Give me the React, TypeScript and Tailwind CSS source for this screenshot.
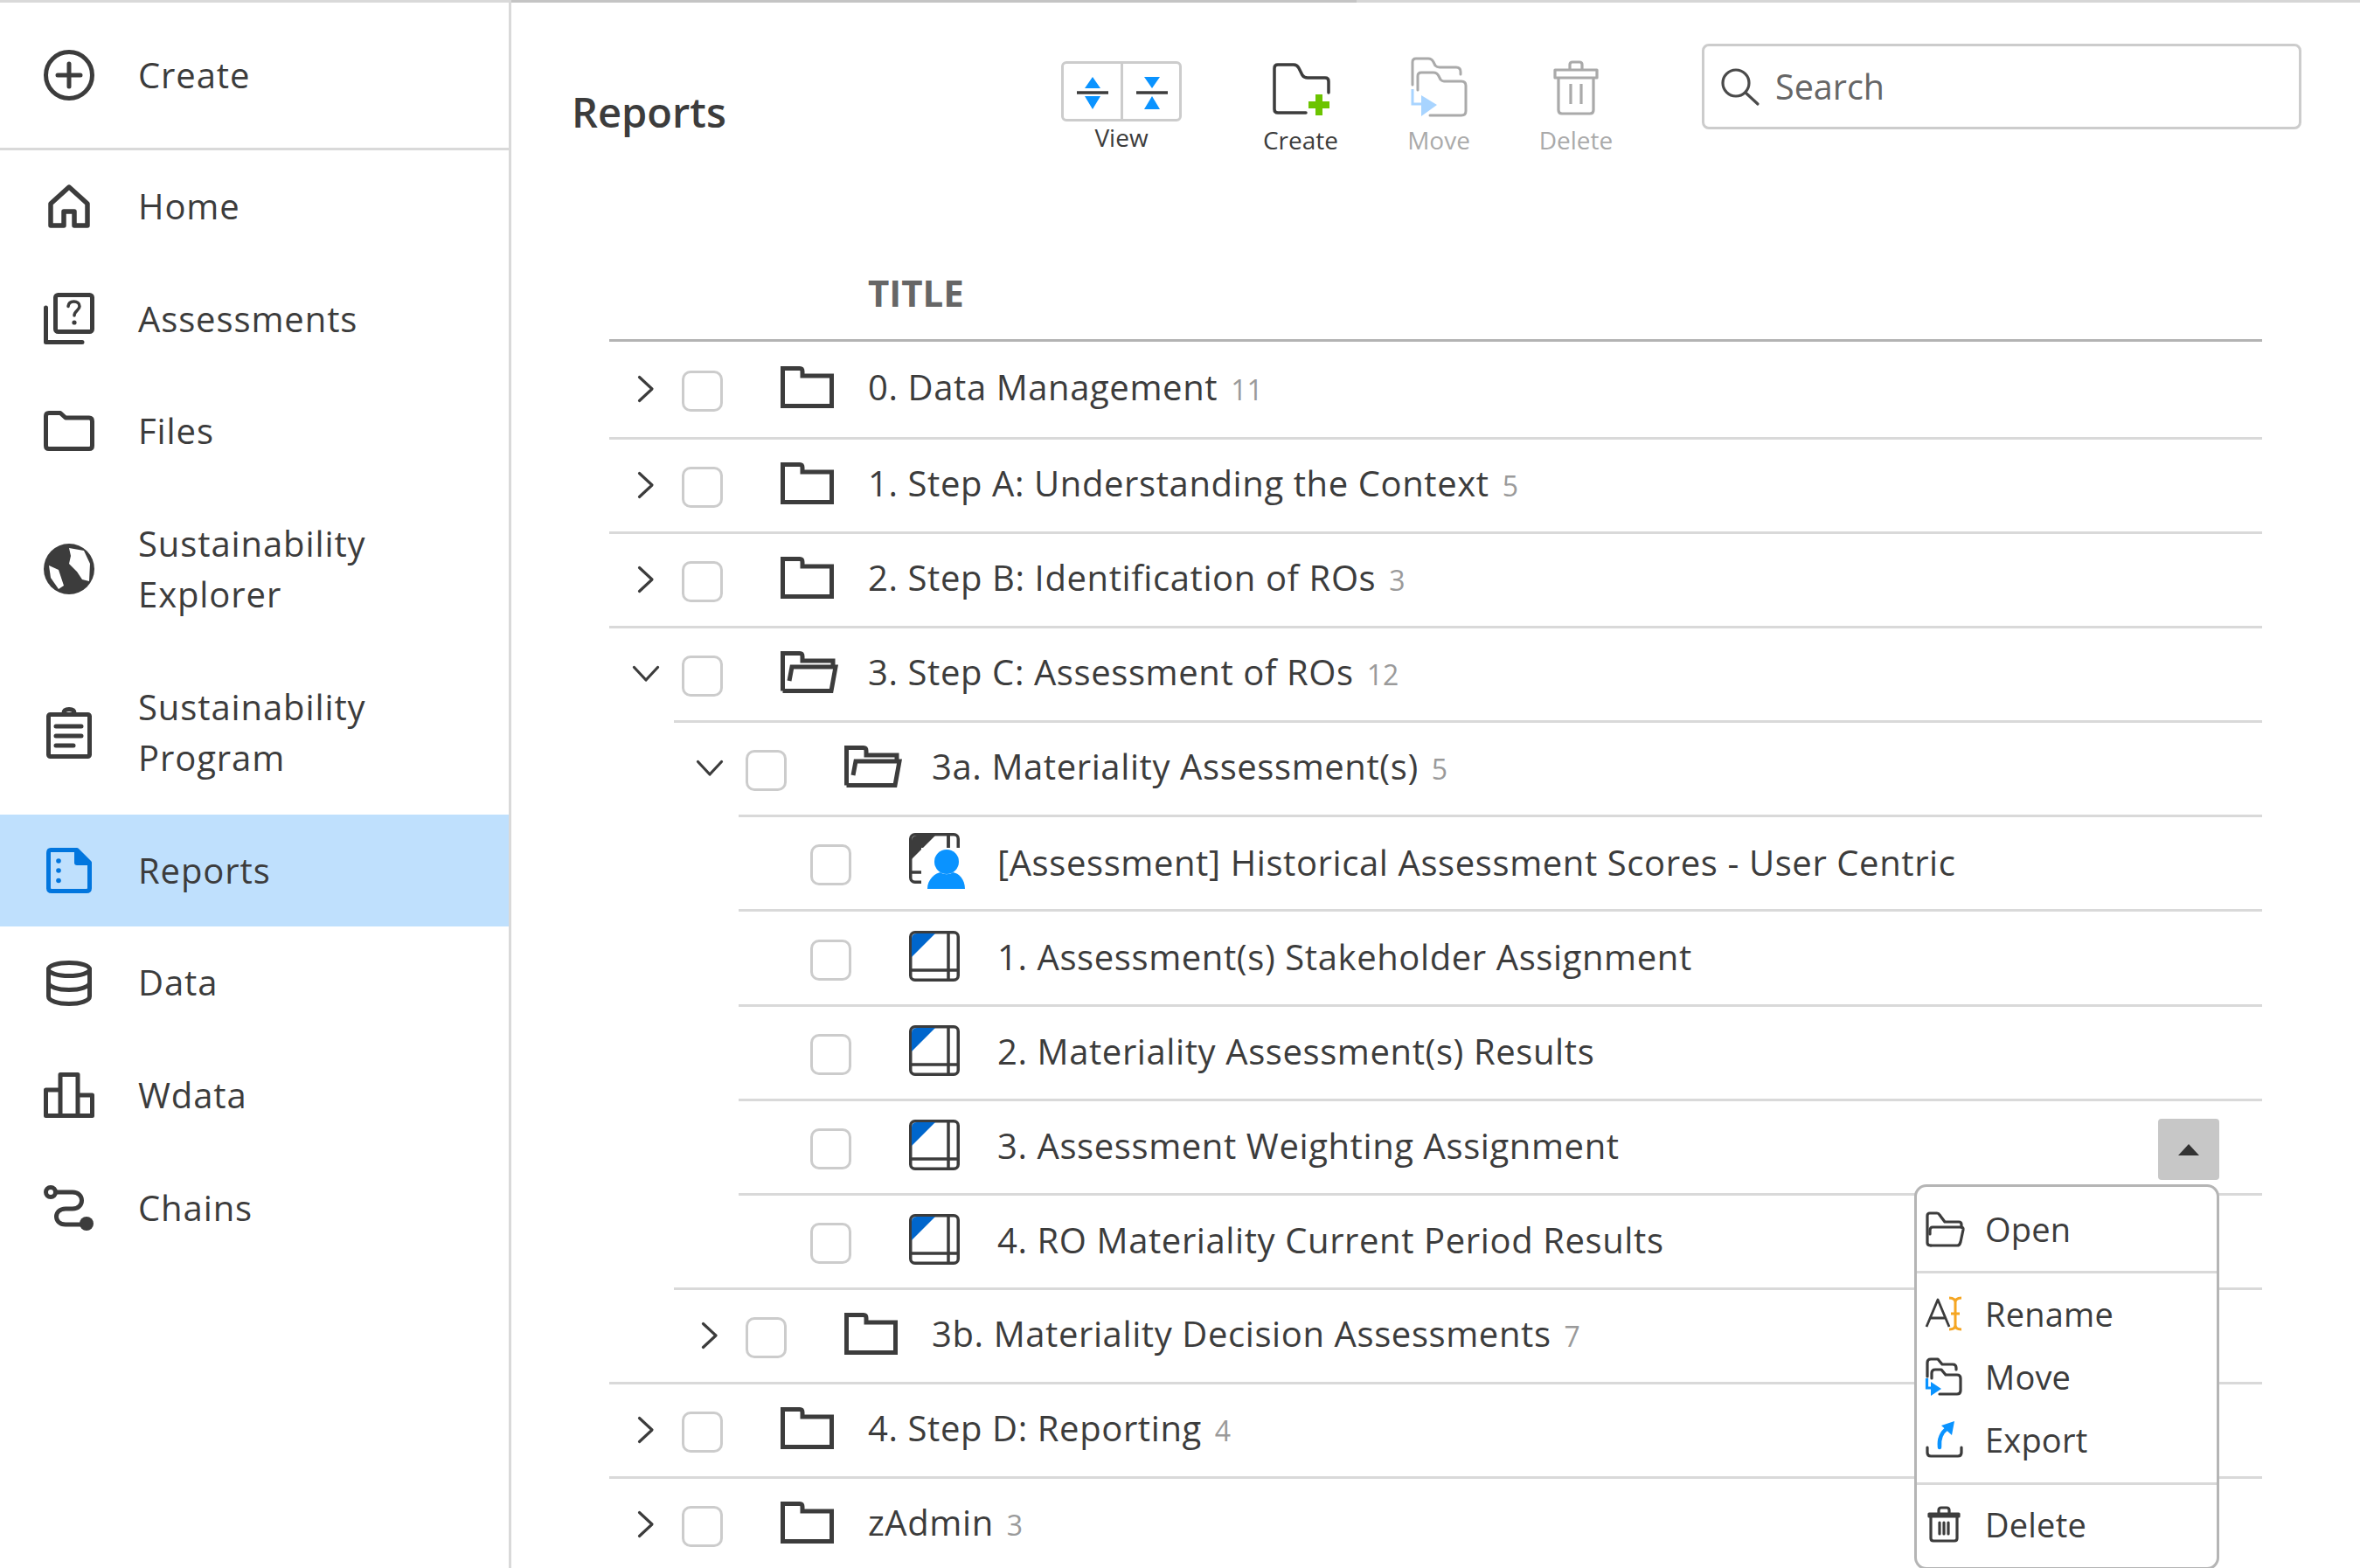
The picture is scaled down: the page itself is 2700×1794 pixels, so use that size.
import React from "react";

const ink = "#3c3c3c";

function NavRow({ h, icon, label, active }: { h: string; icon: React.ReactNode; label: React.ReactNode; active?: boolean }) {
  return (
    <div className={`flex items-center ${h} ${active ? "bg-[#bfe0fd]" : ""}`}>
      <div className="w-[158px] pl-[50px] shrink-0 flex">{icon}</div>
      <div className="text-[40px] leading-[58.5px] tracking-[0.9px] text-[#3c3c3c]">{label}</div>
    </div>
  );
}

const Sv = ({ w, h, children, className }: { w: number; h: number; children: React.ReactNode; className?: string }) => (
  <svg width={w} height={h} viewBox={`0 0 ${w} ${h}`} fill="none" className={`block shrink-0 overflow-visible ${className ?? ""}`}>
    {children}
  </svg>
);

const sw = { stroke: ink, strokeWidth: 5, strokeLinejoin: "round" as const, strokeLinecap: "round" as const };

const NavIcons = {
  create: (
    <Sv w={58} h={58}>
      <circle cx="29" cy="29" r="26.5" {...sw} />
      <path d="M29 16V42M16 29H42" {...sw} />
    </Sv>
  ),
  home: (
    <Sv w={58} h={50}>
      <path d="M8 22L29 3L50 22V47H35V31H23V47H8Z" stroke={ink} strokeWidth="5.5" strokeLinejoin="round" strokeLinecap="round" />
    </Sv>
  ),
  assess: (
    <Sv w={58} h={59}>
      <rect x="13.5" y="2.5" width="42" height="42" rx="3" {...sw} />
      <path d="M2.5 17V56.5H44" {...sw} />
      <path d="M28 15.5C28.5 11.5 31 10 34.5 10C38 10 41 12 41 15.5C41 20 35 20.5 35 26" stroke={ink} strokeWidth="3.5" strokeLinecap="round" />
      <circle cx="35" cy="34" r="2.6" fill={ink} />
    </Sv>
  ),
  files: (
    <Sv w={58} h={46}>
      <path d="M2.5 6Q2.5 2.5 6 2.5H19L25 8H52Q55.5 8 55.5 12V40Q55.5 43.5 52 43.5H6Q2.5 43.5 2.5 40Z" {...sw} />
    </Sv>
  ),
  globe: (
    <Sv w={58} h={58}>
      <circle cx="29" cy="29" r="29" fill={ink} />
      <path d="M29 5L46 8L53 23L52 43L44 41L38 32L29 23L31 14Z" fill="#fff" />
      <path d="M6 25L17 30L23 48L17 52L8 39Z" fill="#fff" />
    </Sv>
  ),
  clip: (
    <Sv w={58} h={59}>
      <rect x="5.5" y="8.5" width="47" height="48" rx="2" {...sw} />
      <path d="M23 7Q23 2.5 29 2.5Q35 2.5 35 7" {...sw} />
      <path d="M14 22H43M14 33H43M14 44H34" stroke={ink} strokeWidth="5" strokeLinecap="round" />
    </Sv>
  ),
  reports: (
    <Sv w={58} h={52}>
      <path d="M8 2.5H38L52.5 17V46Q52.5 49.5 49 49.5H9Q5.5 49.5 5.5 46V6Q5.5 2.5 8 2.5Z" stroke="#0276de" strokeWidth="5" strokeLinejoin="round" />
      <path d="M35 2H39L53 16V20H38Q35 20 35 17Z" fill="#0276de" />
      <circle cx="17" cy="15" r="2.8" fill="#0276de" />
      <circle cx="17" cy="26" r="2.8" fill="#0276de" />
      <circle cx="17" cy="37.5" r="2.8" fill="#0276de" />
    </Sv>
  ),
  data: (
    <Sv w={58} h={52}>
      <ellipse cx="29" cy="10" rx="23.5" ry="7.5" {...sw} />
      <path d="M5.5 10V41C5.5 46 16 49.5 29 49.5C42 49.5 52.5 46 52.5 41V10" {...sw} />
      <path d="M5.5 25C5.5 30 16 33.5 29 33.5C42 33.5 52.5 30 52.5 25" {...sw} />
    </Sv>
  ),
  wdata: (
    <Sv w={58} h={52}>
      <path d="M19 49.5H2.5V20H19V2.5H39V26H55.5V49.5H39M19 49.5V20M19 49.5H39M39 49.5V26" {...sw} />
    </Sv>
  ),
  chains: (
    <Sv w={58} h={52}>
      <circle cx="8" cy="8" r="5.5" {...sw} />
      <path d="M14 8H33C47 8 47 27 33 27H25C11 27 11 45 25 45H48" {...sw} />
      <circle cx="49" cy="44" r="8" fill={ink} />
    </Sv>
  ),
};

function Chevron({ open }: { open?: boolean }) {
  return open ? (
    <Sv w={30} h={18}>
      <path d="M1.5 1.5L15 16L28.5 1.5" stroke={ink} strokeWidth="3.2" strokeLinecap="round" strokeLinejoin="round" />
    </Sv>
  ) : (
    <Sv w={18} h={30}>
      <path d="M1.5 1.5L16 15L1.5 28.5" stroke={ink} strokeWidth="3.2" strokeLinecap="round" strokeLinejoin="round" />
    </Sv>
  );
}

const FolderIcon = (
  <Sv w={61} h={48}>
    <path d="M2.5 45.5V2.5H22Q25 2.5 25 6V11H58.5V45.5Z" stroke={ink} strokeWidth="5" strokeLinejoin="miter" />
  </Sv>
);
const OpenFolderIcon = (
  <Sv w={64} h={48}>
    <path d="M2.5 45.5V2.5H22Q25 2.5 25 6V11H60V18" stroke={ink} strokeWidth="5" />
    <path d="M10 34L13 18H63L58 45.5H2.5" stroke={ink} strokeWidth="5" />
  </Sv>
);
const DocIcon = (
  <Sv w={58} h={58}>
    <rect x="1.75" y="1.75" width="54.5" height="54.5" rx="5" stroke={ink} strokeWidth="3.5" />
    <path d="M3 9Q3 3 9 3H30L3 30Z" fill="#0066cc" />
    <path d="M45 2V56M2 45H56" stroke={ink} strokeWidth="3.5" />
  </Sv>
);
const DocUserIcon = (
  <Sv w={66} h={64}>
    <rect x="1.75" y="1.75" width="54.5" height="54.5" rx="5" stroke={ink} strokeWidth="3.5" />
    <path d="M3 9Q3 3 9 3H30L3 30Z" fill={ink} />
    <path d="M45 2V30M2 45H30" stroke={ink} strokeWidth="3.5" />
    <rect x="14" y="17" width="52" height="48" fill="#fff" />
    <path d="M45 2V17" stroke={ink} strokeWidth="3.5" />
    <circle cx="43" cy="33" r="14" fill="#0a93ff" />
    <path d="M21 64C21 53 30 46 36 45C39 48 47 48 50 45C57 46 64 53 64 64Z" fill="#0a93ff" />
  </Sv>
);

type RowP = {
  level: number;
  line: string;
  chevron?: "open" | "closed";
  icon: React.ReactNode;
  title: string;
  count?: string;
  first?: boolean;
  extra?: React.ReactNode;
};

function TableRow({ level, line, chevron, icon, title, count, first, extra }: RowP) {
  const indent = level === 0 ? "" : level === 1 ? "pl-[73px]" : "pl-[147px]";
  const iconW = level === 2 ? "w-[101px]" : "w-[100px]";
  return (
    <div>
      <div className={`flex items-center relative ${first ? "h-[109px]" : "h-[105.1px]"} ${indent}`}>
        <div className="w-[83px] shrink-0 flex justify-center -mt-px">
          {chevron ? <Chevron open={chevron === "open"} /> : null}
        </div>
        <div className="w-[47px] h-[47px] mt-[4px] shrink-0 rounded-[10px] border-[3px] border-[#cccccc] bg-white" />
        <div className="w-[66px] shrink-0" />
        <div className={`${iconW} shrink-0 -mt-[5px]`}>{icon}</div>
        <div className="-mt-[2px] flex items-baseline whitespace-nowrap">
          <span className="text-[40px] leading-[52px] tracking-[0.6px] text-[#3c3c3c]">{title}</span>
          {count ? <span className="ml-[15px] text-[32px] leading-[52px] text-[#9a9a9a]">{count}</span> : null}
        </div>
        {extra}
      </div>
      {line !== "none" ? <div className={`h-[3px] bg-[#d9d9d9] ${line}`} /> : null}
    </div>
  );
}

function MenuItem({ h, icon, label }: { h: string; icon: React.ReactNode; label: string }) {
  return (
    <div className={`flex items-center ${h}`}>
      <div className="w-[78px] pl-[10px] shrink-0 flex">{icon}</div>
      <span className="text-[38px] tracking-[0.2px] leading-[50px] text-[#3c3c3c]">{label}</span>
    </div>
  );
}

const ms = { stroke: ink, strokeWidth: 3.2, strokeLinejoin: "round" as const, strokeLinecap: "round" as const };

const ContextMenu = (
  <div className="absolute top-[75px] right-0 w-[349px] h-[441px] z-10 bg-white rounded-[14px] border-[3px] border-[#b5b5b5]">
    <MenuItem
      h="h-[96px]"
      label="Open"
      icon={
        <Sv w={44} h={41}>
          <path d="M6 39H36Q39 39 40 35L43 21Q43.5 18 40 18H8Q5 18 5 22V26" {...ms} />
          <path d="M41 18V15Q41 12 38 12H22L16 4Q15 2 13 2H5Q2 2 2 5V36Q2 39 6 39" {...ms} />
        </Sv>
      }
    />
    <div className="h-[3px] bg-[#d9d9d9]" />
    <div className="pt-[10px] pb-[13px]">
      <MenuItem
        h="h-[72px]"
        label="Rename"
        icon={
          <Sv w={42} h={38}>
            <path d="M1 34L14 3L27 34M6 24H22" stroke={ink} strokeWidth="2.8" strokeLinejoin="round" />
            <path d="M27 1Q34 1 34 6V32Q34 37 27 37M41 1Q34 1 34 6M41 37Q34 37 34 32M29 19H39" stroke="#f5a623" strokeWidth="3" />
          </Sv>
        }
      />
      <MenuItem
        h="h-[72px]"
        label="Move"
        icon={
          <Sv w={42} h={44}>
            <path d="M2 22V6Q2 2 6 2H14L19 8H31Q35 8 35 12V14" {...ms} />
            <path d="M7 24V18Q7 14 11 14H18L23 20H36Q40 20 40 24V38Q40 42 36 42H16" {...ms} />
            <path d="M1.5 24V35H8" stroke="#0a93ff" strokeWidth="3.2" />
            <path d="M6 28L18 36L6 44Z" fill="#0a93ff" />
          </Sv>
        }
      />
      <MenuItem
        h="h-[72px]"
        label="Export"
        icon={
          <Sv w={42} h={42}>
            <path d="M2 30V36Q2 40 6 40H37Q41 40 41 36V30" {...ms} />
            <path d="M16 30C15 20 18 13 25 8" stroke="#0a93ff" strokeWidth="4.5" strokeLinecap="round" />
            <path d="M18 5L33 0L30 16Z" fill="#0a93ff" />
          </Sv>
        }
      />
    </div>
    <div className="h-[3px] bg-[#d9d9d9]" />
    <MenuItem
      h="h-[90px]"
      label="Delete"
      icon={
        <Sv w={42} h={42}>
          <path d="M4 9H38V12H4ZM6 12V37Q6 40 9 40H33Q36 40 36 37V12M15 9V5Q15 2 18 2H24Q27 2 27 5V9M16 19V32M26 19V32M21 19V32" {...ms} />
        </Sv>
      }
    />
  </div>
);

const L0 = "";
const L1 = "ml-[74px]";
const L2 = "ml-[148px]";

export default function App() {
  return (
    <div className="w-[2700px] h-[1794px] overflow-hidden bg-white flex flex-col font-['Open_Sans',sans-serif]">
      <div className="h-[3px] shrink-0 flex">
        <div className="w-[585px] bg-[#d9d9d9]" />
        <div className="w-[967px] bg-[#c4c4c4]" />
        <div className="flex-1 bg-[#d6d6d6]" />
      </div>
      <div className="flex-1 flex min-h-0">
        <aside className="w-[585px] shrink-0 border-r-[3px] border-[#d9d9d9]">
          <NavRow h="h-[166px]" icon={NavIcons.create} label="Create" />
          <div className="h-[3px] bg-[#d9d9d9]" />
          <NavRow h="h-[128.6px]" icon={NavIcons.home} label="Home" />
          <NavRow h="h-[128.6px]" icon={NavIcons.assess} label="Assessments" />
          <NavRow h="h-[128.6px]" icon={NavIcons.files} label="Files" />
          <NavRow h="h-[187px]" icon={NavIcons.globe} label={<>Sustainability<br />Explorer</>} />
          <NavRow h="h-[187px]" icon={NavIcons.clip} label={<>Sustainability<br />Program</>} />
          <NavRow h="h-[128.6px]" icon={NavIcons.reports} label="Reports" active />
          <NavRow h="h-[128.6px]" icon={NavIcons.data} label="Data" />
          <NavRow h="h-[128.6px]" icon={NavIcons.wdata} label="Wdata" />
          <NavRow h="h-[128.6px]" icon={NavIcons.chains} label="Chains" />
        </aside>
        <main className="flex-1 min-w-0">
          <div className="flex items-start h-[287px] pl-[69px]">
            <div className="w-[560px] shrink-0 mt-[95px] text-[47px] leading-[60px] font-semibold text-[#3c3c3c]">Reports</div>
            <div className="w-[138px] shrink-0 mt-[67px] flex flex-col items-center">
              <div className="w-full h-[69px] flex rounded-[6px] border-[3px] border-[#cccccc]">
                <div className="flex-1 border-r-[3px] border-[#cccccc]">
                  <Sv w={65} h={63}>
                    <path d="M24 28L33 15L42 28Z M24 37L33 52L42 37Z" fill="#0a93ff" />
                    <path d="M15 33H51" stroke={ink} strokeWidth="3.5" />
                  </Sv>
                </div>
                <div className="flex-1">
                  <Sv w={66} h={63}>
                    <path d="M24 15H42L33 28Z M24 52H42L33 37Z" fill="#0a93ff" />
                    <path d="M15 33H51" stroke={ink} strokeWidth="3.5" />
                  </Sv>
                </div>
              </div>
              <div className="text-[28px] leading-[36px] text-[#3c3c3c]">View</div>
            </div>
            <div className="w-[110px] shrink-0 ml-[81px] mt-[62px] flex flex-col items-center">
              <div className="h-[75px] w-full flex justify-center pt-[7px] pl-[2px]">
                <Sv w={66} h={60}>
                  <path d="M38 57H6Q2 57 2 53V6Q2 2 6 2H24Q28 2 30 6L34 14Q36 17 40 17H60Q64 17 64 21V34" stroke={ink} strokeWidth="3.5" strokeLinecap="round" />
                  <path d="M41 44H49V36H57V44H65V52H57V60H49V52H41Z" fill="#6cc400" />
                </Sv>
              </div>
              <div className="mt-[2px] text-[28px] leading-[36px] text-[#3c3c3c]">Create</div>
            </div>
            <div className="w-[110px] shrink-0 ml-[48px] mt-[62px] flex flex-col items-center">
              <div className="h-[75px] w-full flex justify-center">
                <Sv w={65} h={70}>
                  <path d="M2 32V6Q2 2 6 2H20Q24 2 26 6L28 10Q30 12 33 12H52Q57 12 57 17V20" stroke="#aaaaaa" strokeWidth="3" strokeLinecap="round" />
                  <path d="M8 38V22Q8 18 12 18H26Q30 18 32 22L34 26Q36 28 38 28H58Q63 28 63 33V62Q63 67 58 67H22" stroke="#aaaaaa" strokeWidth="3" strokeLinecap="round" />
                  <path d="M2 37V54H14" stroke="#a8d4ff" strokeWidth="3" />
                  <path d="M12 44L30 55L12 68Z" fill="#a8d4ff" />
                </Sv>
              </div>
              <div className="mt-[2px] text-[28px] leading-[36px] text-[#aaaaaa]">Move</div>
            </div>
            <div className="w-[110px] shrink-0 ml-[47px] mt-[62px] flex flex-col items-center">
              <div className="h-[75px] w-full flex justify-center pt-[4px]">
                <Sv w={52} h={62}>
                  <path d="M2 11H50V20H2ZM6 20V57Q6 61 10 61H42Q46 61 46 57V20M19 11V5Q19 2 22 2H30Q33 2 33 5V11M20 27V50M32 27V50" stroke="#aaaaaa" strokeWidth="3.2" strokeLinejoin="round" />
                </Sv>
              </div>
              <div className="mt-[2px] text-[28px] leading-[36px] text-[#aaaaaa]">Delete</div>
            </div>
            <div className="w-[686px] h-[98px] shrink-0 ml-[89px] mt-[47px] flex items-center rounded-[8px] border-[3px] border-[#cccccc] pl-[19px]">
              <Sv w={43} h={42}>
                <circle cx="17" cy="17" r="15" stroke="#4a4a4a" strokeWidth="3.2" />
                <path d="M28 28L42 41" stroke="#4a4a4a" strokeWidth="3.2" strokeLinecap="round" />
              </Sv>
              <span className="ml-[19px] text-[39.5px] leading-[52px] text-[#666666]">Search</span>
            </div>
          </div>
          <div className="w-[1891px] ml-[112px]">
            <div className="h-[101px] border-b-[3px] border-[#b3b3b3] flex items-center pl-[296px] pb-[9px]">
              <span className="text-[42px] leading-[50px] font-bold text-[#666666]">TITLE</span>
            </div>
            <TableRow first level={0} line={L0} chevron="closed" icon={FolderIcon} title="0. Data Management" count="11" />
            <TableRow level={0} line={L0} chevron="closed" icon={FolderIcon} title="1. Step A: Understanding the Context" count="5" />
            <TableRow level={0} line={L0} chevron="closed" icon={FolderIcon} title="2. Step B: Identification of ROs" count="3" />
            <TableRow level={0} line={L1} chevron="open" icon={OpenFolderIcon} title="3. Step C: Assessment of ROs" count="12" />
            <TableRow level={1} line={L2} chevron="open" icon={OpenFolderIcon} title="3a. Materiality Assessment(s)" count="5" />
            <TableRow level={2} line={L2} icon={DocUserIcon} title="[Assessment] Historical Assessment Scores - User Centric" />
            <TableRow level={2} line={L2} icon={DocIcon} title="1. Assessment(s) Stakeholder Assignment" />
            <TableRow level={2} line={L2} icon={DocIcon} title="2. Materiality Assessment(s) Results" />
            <TableRow
              level={2}
              line={L2}
              icon={DocIcon}
              title="3. Assessment Weighting Assignment"
              extra={
                <div className="ml-auto mr-[49px] mt-[6px] relative">
                  <div className="w-[70px] h-[70px] rounded-[4px] bg-[#c7c7c7] flex items-center justify-center">
                    <Sv w={24} h={13}>
                      <path d="M12 0L24 13H0Z" fill="#333333" />
                    </Sv>
                  </div>
                  {ContextMenu}
                </div>
              }
            />
            <TableRow level={2} line={L1} icon={DocIcon} title="4. RO Materiality Current Period Results" />
            <TableRow level={1} line={L0} chevron="closed" icon={FolderIcon} title="3b. Materiality Decision Assessments" count="7" />
            <TableRow level={0} line={L0} chevron="closed" icon={FolderIcon} title="4. Step D: Reporting" count="4" />
            <TableRow level={0} line="none" chevron="closed" icon={FolderIcon} title="zAdmin" count="3" />
          </div>
        </main>
      </div>
    </div>
  );
}
